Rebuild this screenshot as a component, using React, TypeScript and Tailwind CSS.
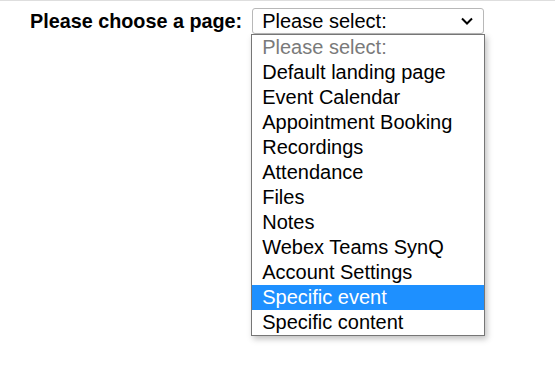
import React from "react";

const options = [
  "Please select:",
  "Default landing page",
  "Event Calendar",
  "Appointment Booking",
  "Recordings",
  "Attendance",
  "Files",
  "Notes",
  "Webex Teams SynQ",
  "Account Settings",
  "Specific event",
  "Specific content",
];

export default function App() {
  return (
    <div
      className="w-[555px] h-[372px] bg-white border-t border-[#dedede] overflow-hidden"
      style={{ fontFamily: '"Liberation Sans", Arial, sans-serif' }}
    >
      <div className="flex items-start pl-[30px] pt-[7px]">
        <div className="text-[19.8px] font-bold text-black leading-[26px]">
          Please choose a page:
        </div>
        <div className="relative ml-[10px]">
          <div className="w-[232px] h-[26px] border border-[#b8b8b8] rounded-[3px] bg-white flex items-center pl-[9px] pr-[8px] text-[20px] text-black leading-none">
            <span className="flex-1">Please select:</span>
            <svg width="14" height="10" viewBox="0 0 14 10" className="mr-[1px]">
              <path d="M2 2.5 L7 7.5 L12 2.5" fill="none" stroke="#000" strokeWidth="2" />
            </svg>
          </div>
          <div className="absolute left-[-1px] top-[26px] w-[234px] border border-[#767676] bg-white shadow-[2px_3px_6px_rgba(0,0,0,0.25)]">
            {options.map((o, i) => (
              <div
                key={o}
                className={
                  "h-[25px] pl-[10px] text-[20px] leading-[25px] " +
                  (i === 0
                    ? "text-[#7a7a7a]"
                    : i === 10
                    ? "bg-[#1e90ff] text-white"
                    : "text-black")
                }
              >
                {o}
              </div>
            ))}
          </div>
        </div>
      </div>
    </div>
  );
}
